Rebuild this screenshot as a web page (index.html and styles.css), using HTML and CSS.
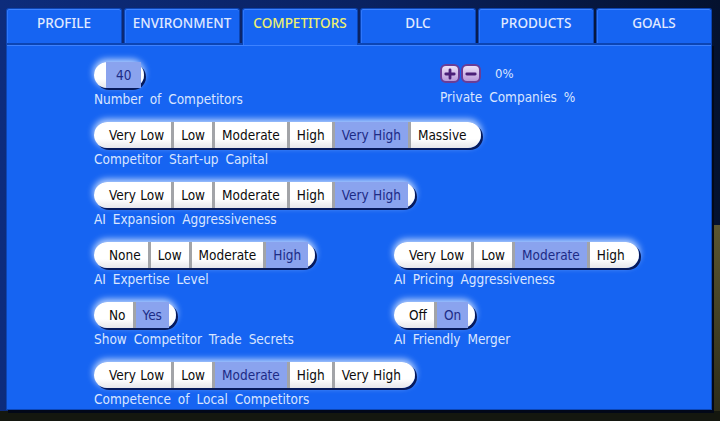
FILE: index.html
```html
<!DOCTYPE html>
<html lang="en">
<head>
    <meta charset="UTF-8">
    <meta name="viewport" content="width=device-width, initial-scale=1.0">
    <title>Competitors</title>
    <link rel="stylesheet" href="styles.css">
</head>
<body>
    <div class="screen">
        <nav class="tabs">
            <div class="tab">PROFILE</div>
            <div class="tab">ENVIRONMENT</div>
            <div class="tab active">COMPETITORS</div>
            <div class="tab">DLC</div>
            <div class="tab">PRODUCTS</div>
            <div class="tab">GOALS</div>
        </nav>
        <section class="panel">
            <div class="field">
                <div class="pill small">
                    <span class="seg on">40</span>
                </div>
                <div class="label">Number of Competitors</div>
            </div>
            <div class="field private">
                <div class="stepper">
                    <span class="step-btn">
                        <svg viewBox="0 0 12 12" width="12" height="12"><path d="M6 1.8v8.4M1.8 6h8.4" stroke="#4a1f78" stroke-width="2.8" stroke-linecap="round"/></svg>
                    </span>
                    <span class="step-btn">
                        <svg viewBox="0 0 12 12" width="12" height="12"><path d="M1.8 6h8.4" stroke="#4a1f78" stroke-width="2.8" stroke-linecap="round"/></svg>
                    </span>
                    <span class="pct">0%</span>
                </div>
                <div class="label">Private Companies %</div>
            </div>

            <div class="field wide">
                <div class="pill">
                    <span class="seg">Very Low</span>
                    <span class="seg">Low</span>
                    <span class="seg">Moderate</span>
                    <span class="seg">High</span>
                    <span class="seg on">Very High</span>
                    <span class="seg">Massive</span>
                </div>
                <div class="label">Competitor Start-up Capital</div>
            </div>

            <div class="field wide">
                <div class="pill">
                    <span class="seg">Very Low</span>
                    <span class="seg">Low</span>
                    <span class="seg">Moderate</span>
                    <span class="seg">High</span>
                    <span class="seg on">Very High</span>
                </div>
                <div class="label">AI Expansion Aggressiveness</div>
            </div>

            <div class="field">
                <div class="pill">
                    <span class="seg">None</span>
                    <span class="seg">Low</span>
                    <span class="seg">Moderate</span>
                    <span class="seg on">High</span>
                </div>
                <div class="label">AI Expertise Level</div>
            </div>
            <div class="field">
                <div class="pill">
                    <span class="seg">Very Low</span>
                    <span class="seg">Low</span>
                    <span class="seg on">Moderate</span>
                    <span class="seg">High</span>
                </div>
                <div class="label">AI Pricing Aggressiveness</div>
            </div>

            <div class="field">
                <div class="pill">
                    <span class="seg">No</span>
                    <span class="seg on">Yes</span>
                </div>
                <div class="label">Show Competitor Trade Secrets</div>
            </div>
            <div class="field">
                <div class="pill">
                    <span class="seg">Off</span>
                    <span class="seg on">On</span>
                </div>
                <div class="label">AI Friendly Merger</div>
            </div>

            <div class="field wide">
                <div class="pill">
                    <span class="seg">Very Low</span>
                    <span class="seg">Low</span>
                    <span class="seg on">Moderate</span>
                    <span class="seg">High</span>
                    <span class="seg">Very High</span>
                </div>
                <div class="label">Competence of Local Competitors</div>
            </div>
        </section>
    </div>
</body>
</html>
```

FILE: styles.css
```css
html, body {
    margin: 0;
    height: 100%;
}
body {
    width: 720px;
    height: 421px;
    overflow: hidden;
    background:
        linear-gradient(to bottom, transparent 0, transparent 411px, #14170f 411px),
        linear-gradient(to bottom, transparent 0, transparent 225px, #5a5530 225px, #2a2a18 100%) right top / 6px 100% no-repeat,
        linear-gradient(to right, #0d2c7c, #0a2262 50%, #04112e);
    font-family: "DejaVu Sans Condensed", "DejaVu Sans", sans-serif;
}
.screen {
    padding: 8px 0 0 6px;
    width: 706px;
}
.tabs {
    display: flex;
    gap: 2px;
    height: 35px;
    align-items: flex-end;
    position: relative;
    z-index: 1;
}
.tab {
    width: 116px;
    height: 35px;
    box-sizing: border-box;
    display: flex;
    justify-content: center;
    align-items: center;
    padding-bottom: 6px;
    background: #1664f2;
    border: 1px solid #0c45b4;
    border-bottom: none;
    border-radius: 3px 3px 0 0;
    box-shadow: inset 0 1px 0 #3d82ff, inset 1px 0 0 #2e76fa;
    font-family: "Noto Sans", sans-serif;
    font-size: 13.5px;
    font-weight: 500;
    color: #e0e9ff;
}
.tab.active {
    height: 37px;
    margin-bottom: -2px;
    padding-bottom: 8px;
    color: #eef070;
    background: #1664f2;
}
.panel {
    height: 367px;
    box-sizing: border-box;
    background: #1664f2;
    border: 1px solid #0c45b4;
    border-top: 2px solid #0c45b4;
    box-shadow: inset 0 1px 0 #3d82ff, 2px 3px 0 #020818;
    padding: 17px 0 0 87px;
    display: grid;
    grid-template-columns: 300px 1fr;
    grid-auto-rows: 60px;
}
.field.wide {
    grid-column: 1 / -1;
}
.pill {
    display: inline-flex;
    height: 26px;
    padding: 0 7px 0 8px;
    border-radius: 13px;
    background: linear-gradient(#ffffff 65%, #e6e6ea);
    box-shadow: 2px 2px 0 #061a5c, 0 -2px 6px 1px rgba(220, 234, 255, 0.8);
    font-size: 13.5px;
    word-spacing: 0.5px;
    color: #0c0c0c;
}
.seg {
    display: flex;
    align-items: center;
    padding: 0 7px;
    border-left: 3px solid #a2a4a8;
}
.seg:first-child {
    border-left: none;
}
.seg.on {
    background: #8aa3ee;
    color: #1c2c86;
}
.pill.small {
    padding: 0 3px 0 12px;
}
.pill.small .seg {
    padding: 0 10px;
}
.label {
    margin-top: 3px;
    font-size: 13.5px;
    word-spacing: 3px;
    color: #d9e5ff;
    line-height: 16px;
}
.private {
    padding-left: 46px;
}
.stepper {
    display: flex;
    align-items: center;
    height: 21px;
    margin-top: 1px;
    margin-bottom: 5px;
}
.step-btn {
    width: 20px;
    height: 19px;
    box-sizing: border-box;
    margin-right: 1px;
    border: 2px solid #6a3d96;
    border-radius: 6px;
    background: linear-gradient(#ece2f8, #b898da);
    display: flex;
    justify-content: center;
    align-items: center;
}
.pct {
    margin-left: 13px;
    font-size: 13px;
    color: #dce6ff;
}
.private .label {
    margin-top: 3px;
}
```
